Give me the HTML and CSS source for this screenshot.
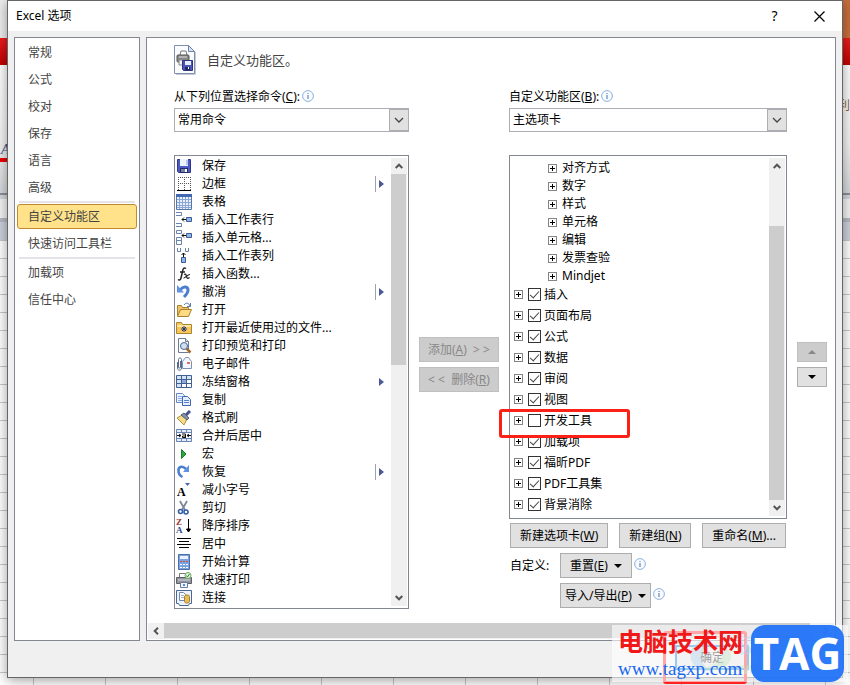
FILE: index.html
```
<!DOCTYPE html>
<html lang="zh-CN">
<head>
  <meta charset="UTF-8" />
  <meta name="viewport" content="width=device-width, initial-scale=1.0"/>
  <title>Excel 选项</title>
  <link rel="stylesheet" href="styles.css">
</head>
<body>

  <!-- Shared symbols -->
  <svg class="symbols" width="0" height="0">
    <symbol id="info" viewBox="0 0 12 12">
      <circle cx="6" cy="6" r="5.400" fill="#f7faff" stroke="#8fb0de"/>
      <path d="M5.500 3h1v1h-1zM5.500 5h1v4h-1z" fill="#4a6fa8"/>
    </symbol>
    <symbol id="chevron" viewBox="0 0 10 6">
      <path d="M1 1l4 4 4-4" fill="none" stroke="currentColor" stroke-width="1.3"/>
    </symbol>
    <symbol id="scroll-arrow" viewBox="0 0 8 6">
      <path d="M.7 5L4 1.700 7.300 5" fill="none" stroke="#555" stroke-width="2"/>
    </symbol>
    <symbol id="flyout" viewBox="0 0 5 8">
      <path d="M0 0l5 4-5 4z" fill="#4a5a98"/>
    </symbol>
    <symbol id="caret" viewBox="0 0 8 4">
      <path d="M0 0h8L4 4z" fill="currentColor"/>
    </symbol>
  </svg>

  <!-- Workbook behind the dialog -->
  <div class="workbook">
    <div class="wb-title"></div>
    <div class="wb-tabs"></div>
    <div class="wb-ribbon"><span class="wb-font">A</span><span class="wb-label">利</span></div>
    <div class="wb-formula"></div>
    <div class="wb-header"></div>
    <div class="wb-grid"></div>
  </div>

  <div class="dialog">
    <header class="titlebar">
      <h1>Excel 选项</h1>
      <button class="title-btn" aria-label="帮助">?</button>
      <button class="title-btn" aria-label="关闭">
        <svg width="11" height="11" viewBox="0 0 11 11"><path d="M.5.5l10 10M10.500.5l-10 10" stroke="#000" stroke-width="1.2"/></svg>
      </button>
    </header>

    <div class="client">
      <nav class="nav">
        <ul>
          <li><a href="#">常规</a></li>
          <li><a href="#">公式</a></li>
          <li><a href="#">校对</a></li>
          <li><a href="#">保存</a></li>
          <li><a href="#">语言</a></li>
          <li><a href="#">高级</a></li>
          <li class="sep"></li>
          <li><a href="#" class="active">自定义功能区</a></li>
          <li><a href="#">快速访问工具栏</a></li>
          <li class="sep"></li>
          <li><a href="#">加载项</a></li>
          <li><a href="#">信任中心</a></li>
        </ul>
      </nav>

      <main class="pane">
        <div class="heading">
          <svg width="24" height="30" viewBox="0 0 24 30">
            <path d="M1.500.5h14l6 6v22h-20z" fill="#fafcff" stroke="#7f90ab"/>
            <path d="M22.500 7v22.500H3" fill="none" stroke="#c6cbd3"/>
            <path d="M15.500.5v6h6z" fill="#d4e2f3" stroke="#6e83a8"/>
            <path d="M7 10l1-4h5l1 4" fill="#fff" stroke="#777"/>
            <rect x="4" y="10" width="12" height="7" rx="1" fill="#888" stroke="#555"/>
            <path d="M6 12h8" stroke="#ddd"/>
            <path d="M6 15h6v5H6z" fill="#f5f5f5" stroke="#888"/>
            <path d="M9.500 15.500h10v10h-9l-1-1z" fill="#4b55b5" stroke="#2f3480"/>
            <path d="M12 16h6v4h-6z" fill="#e8efff"/><path d="M12 22h5v3h-5z" fill="#252b60"/><path d="M15 22h1v2h-1z" fill="#fff"/>
          </svg>
          <h2>自定义功能区。</h2>
        </div>

        <div class="columns">
          <!-- Available commands -->
          <section class="commands">
            <div class="field-label">
              <label for="source">从下列位置选择命令(<u>C</u>):</label>
              <svg class="info"><use href="#info"/></svg>
            </div>
            <div class="select">
              <select id="source"><option>常用命令</option></select>
              <span class="drop"><svg width="10" height="6"><use href="#chevron"/></svg></span>
            </div>
            <div class="listbox">
              <ul class="command-list">
                <li>
                  <svg class="icon" viewBox="0 0 16 16"><path d="M1.500 1.500h13v13h-12l-1-1z" fill="#4d58c4" stroke="#30388c"/><path d="M4 1h8v7H4z" fill="#edf3ff"/><path d="M10 2h2v5h-2z" fill="#b5c7f0"/><path d="M4 10h8v5H4z" fill="#252b66"/><path d="M5 11h4v3H5z" fill="#747fa8"/><path d="M9 11h2v3H9z" fill="#fff"/></svg>
                  保存
                </li>
                <li>
                  <svg class="icon" viewBox="0 0 16 16"><path d="M2 1.500h13M2 7.500h13M2.500 1v13M8.500 1v13M14.500 1v13" fill="none" stroke="#555" stroke-dasharray="1 1"/><path d="M1 14.500h14" stroke="#000"/></svg>
                  边框
                  <span class="flyout split"><svg width="5" height="8"><use href="#flyout"/></svg></span>
                </li>
                <li>
                  <svg class="icon" viewBox="0 0 16 16"><path d="M.5.5h15v15H.5z" fill="#e9f1ff" stroke="#5876a7"/><path d="M3.500 3v12M6.500 3v12M9.500 3v12M12.500 3v12M1 5.500h14M1 8.500h14M1 11.500h14M1 13.500h14" stroke="#8aa7d5"/><path d="M0 0h16v3H0z" fill="#4169b0"/></svg>
                  表格
                </li>
                <li>
                  <svg class="icon" viewBox="0 0 16 16"><path d="M0 .5h5.500v3H0M0 11.500h5.500v3H0" fill="#fff" stroke="#6a83ad"/><path d="M6 7.500h4M8 5.500l-2 2 2 2" fill="none" stroke="#111"/><path d="M10.500 5.500h5v4h-5z" fill="#8db5ed" stroke="#3d5d91"/></svg>
                  插入工作表行
                </li>
                <li>
                  <svg class="icon" viewBox="0 0 16 16"><path d="M.5.500h5v3h-5zM.5 7.500h5v3h-5zM.5 10.500h5v4h-5z" fill="#fff" stroke="#6a83ad"/><path d="M6 5.500h4M8 3.500l-2 2 2 2" fill="none" stroke="#111"/><path d="M10.500 3.500h5v4h-5z" fill="#8db5ed" stroke="#3d5d91"/></svg>
                  插入单元格...
                </li>
                <li>
                  <svg class="icon" viewBox="0 0 16 16"><path d="M1.500 0v3.500h3V0M9.500 0v3.500h3V0" fill="#fff" stroke="#6a83ad"/><path d="M7.500 5v4M5.500 7l2-2 2 2" fill="none" stroke="#111"/><path d="M5.500 9.500h4v5h-4z" fill="#8db5ed" stroke="#3d5d91"/></svg>
                  插入工作表列
                </li>
                <li>
                  <svg class="icon" viewBox="0 0 16 16"><path d="M10 2.500c-2-1.500-3 0-3.500 3L5 12c-.5 2-1.500 2.500-3 1.500M4 6h5" fill="none" stroke="#222" stroke-width="1.500"/><path d="M8 8.500c2-1 2 0 2.500 2s1 2.500 3 1M14 8.500c-2-.5-5 4-6.500 3.500" fill="none" stroke="#222" stroke-width="1.200"/></svg>
                  插入函数...
                </li>
                <li>
                  <svg class="icon" viewBox="0 0 16 16"><path d="M4 6c4-5 8-3 8 0 0 3-2 5-4 7" fill="none" stroke="#4b7dd0" stroke-width="3"/><path d="M1 1v7.500h7z" fill="#5e91e3"/></svg>
                  撤消
                  <span class="flyout split"><svg width="5" height="8"><use href="#flyout"/></svg></span>
                </li>
                <li>
                  <svg class="icon" viewBox="0 0 16 16"><path d="M1.500 13.500v-10h4l1 2h6v3" fill="#eec46a" stroke="#a9812d"/><path d="M1.500 14.500l3-7h11l-3 7z" fill="#ffda80" stroke="#a9812d"/><path d="M8 3c2-3 5-2 6 1M14.500 1v3.500H11" fill="none" stroke="#5375a8"/></svg>
                  打开
                </li>
                <li>
                  <svg class="icon" viewBox="0 0 16 16"><path d="M.5 13.500v-11h5l1 2h9v9z" fill="#f5c75d" stroke="#ad842f"/><path d="M1 5h14v2H1z" fill="#ffe6a0"/><path d="M8 6v6M5 9h6M6 7l4 4M10 7l-4 4" stroke="#26387a"/></svg>
                  打开最近使用过的文件...
                </li>
                <li>
                  <svg class="icon" viewBox="0 0 16 16"><path d="M2.500.5h7l3 3v11h-10z" fill="#fff" stroke="#6c7c98"/><path d="M9.500.5v3h3" fill="#dbe5f4" stroke="#6c7c98"/><circle cx="8" cy="8" r="3.500" fill="#cfe2f5" stroke="#4d6687"/><path d="M10.500 10.500l4 4" stroke="#a86a32" stroke-width="2.500"/></svg>
                  打印预览和打印
                </li>
                <li>
                  <svg class="icon" viewBox="0 0 16 16"><path d="M6.500 5.500l3-4h3l3 4v7h-9z" fill="#f2f6ff" stroke="#7c90b5"/><path d="M11 6h3v2h-3z" fill="#e07050"/><path d="M1.500 6v6c0 3 4 3 4 0V3.500c0-2-3-2-3 0V11c0 1.500 2 1.500 2 0V5" fill="none" stroke="#596b89"/></svg>
                  电子邮件
                </li>
                <li>
                  <svg class="icon" viewBox="0 0 16 16"><path d="M.5 1.500h15v12H.5z" fill="#fff" stroke="#42618f"/><path d="M1 2h14v3H1zM1 2h4v11H1z" fill="#d5e2f5"/><path d="M5.500 2v12M10.500 2v12M1 5.500h14M1 9.500h14" stroke="#42618f"/><path d="M6 6h4v3H6z" fill="#8aabe0"/></svg>
                  冻结窗格
                  <span class="flyout"><svg width="5" height="8"><use href="#flyout"/></svg></span>
                </li>
                <li>
                  <svg class="icon" viewBox="0 0 16 16"><path d="M.5 1.500h6l2 2v7h-8z" fill="#edf4ff" stroke="#6586c0"/><path d="M2 4.500h4M2 6.500h4M2 8.500h4" stroke="#8dabe0"/><path d="M6.500 4.500h5l3 3v6h-8z" fill="#e4eeff" stroke="#3f65b0"/><path d="M8 8.500h5M8 10.500h5" stroke="#5c83c8"/></svg>
                  复制
                </li>
                <li>
                  <svg class="icon" viewBox="0 0 16 16"><path d="M1 8l5-3 5 4-3 6z" fill="#f5dc87" stroke="#ad9044"/><path d="M5 5l3-2 5 5-2 2z" fill="#888fa8" stroke="#555d77"/><path d="M10 5l4-4" stroke="#45508f" stroke-width="3"/></svg>
                  格式刷
                </li>
                <li>
                  <svg class="icon" viewBox="0 0 16 16"><path d="M.5 1.500h15v12H.5z" fill="#e5edfa" stroke="#6784b3"/><path d="M1 4.500h14M1 10.500h14M5.500 1v3M10.500 1v3M5.500 11v3M10.500 11v3" stroke="#6784b3"/><path d="M1 5h14v5H1z" fill="#fff"/><path d="M1 7.500h4M11 7.500h4M3 6l2 1.500L3 9M13 6l-2 1.500L13 9M6 6h3.500v4M9 8H6.500v1.500H9" fill="none" stroke="#111"/></svg>
                  合并后居中
                </li>
                <li>
                  <svg class="icon" viewBox="0 0 16 16"><path d="M5.500 3.500v9l4.500-4.500z" fill="#2aa83d" stroke="#168026"/></svg>
                  宏
                </li>
                <li>
                  <svg class="icon" viewBox="0 0 16 16"><path d="M10 5C6 1 2 3 2.500 7c0 3 2 5 4 6" fill="none" stroke="#4b7dd0" stroke-width="2.500"/><path d="M13 1v7H7z" fill="#5e91e3"/></svg>
                  恢复
                  <span class="flyout split"><svg width="5" height="8"><use href="#flyout"/></svg></span>
                </li>
                <li>
                  <svg class="icon" viewBox="0 0 16 16"><text x="1" y="14" class="glyph glyph-a">A</text><path d="M9 1h5l-2.500 3z" fill="#4967a8"/></svg>
                  减小字号
                </li>
                <li>
                  <svg class="icon" viewBox="0 0 16 16"><path d="M4 1l5 9M11 1L6 10" stroke="#7c8797" stroke-width="1.800"/><circle cx="4.500" cy="11.500" r="2" fill="none" stroke="#345da8" stroke-width="1.600"/><circle cx="10" cy="12" r="2" fill="none" stroke="#345da8" stroke-width="1.600"/></svg>
                  剪切
                </li>
                <li>
                  <svg class="icon" viewBox="0 0 16 16"><text x="0" y="7" class="glyph glyph-z">Z</text><text x="0" y="15" class="glyph glyph-sm">A</text><path d="M12.500 1v12M10.500 11l2 3 2-3z" fill="#000" stroke="#000"/></svg>
                  降序排序
                </li>
                <li>
                  <svg class="icon" viewBox="0 0 16 16"><path d="M1 2.500h14M3 5.500h10M1 8.500h14M3 11.500h10" stroke="#000"/></svg>
                  居中
                </li>
                <li>
                  <svg class="icon" viewBox="0 0 16 16"><path d="M2.500.500h11v15h-11z" fill="#7ba3df" stroke="#4b6ea8"/><path d="M4 2h8v3H4z" fill="#eaf2ff"/><path d="M4 7h2v1H4zM7 7h2v1H7zM10 7h2v1h-2z" fill="#d84f42"/><path d="M4 10h2v1H4zM7 10h2v1H7zM10 10h2v1h-2zM4 13h2v1H4zM7 13h2v1H7zM10 13h2v1h-2z" fill="#fff"/></svg>
                  开始计算
                </li>
                <li>
                  <svg class="icon" viewBox="0 0 16 16"><path d="M3.500 6V1.500h7V6" fill="#fff" stroke="#777"/><path d="M.5 5.500h15v6H.5z" fill="#92959c" stroke="#5c5f66"/><path d="M2 8h12" stroke="#d7d9dd"/><path d="M4.500 10.500h7v5h-7z" fill="#eff6ff" stroke="#6c7c98"/><path d="M7 12h2v2H7z" fill="#4a8fd8"/><circle cx="12" cy="3.500" r="3" fill="#e5f5df" stroke="#69a560"/><path d="M10.500 3.500l1 1.500 2-3" fill="none" stroke="#2c8a2c"/></svg>
                  快速打印
                </li>
                <li>
                  <svg class="icon" viewBox="0 0 16 16"><path d="M.5.500h15v13h-2l-1 2h-9l-1-2h-2z" fill="#edf3fc" stroke="#4e6791"/><path d="M3.500 2.500h4l2 2v6h-6z" fill="#fff" stroke="#7188b0"/><path d="M5 5.500h3M5 7.500h3" stroke="#9ab0d5"/><path d="M8.500 6.500c0-2 5-2 5 0v5c0 2-5 2-5 0z" fill="#e7bd5c" stroke="#a4802f"/></svg>
                  连接
                </li>
              </ul>
              <div class="scrollbar">
                <span class="arrow up"><svg width="8" height="6"><use href="#scroll-arrow"/></svg></span>
                <div class="track"><div class="thumb thumb-left"></div></div>
                <span class="arrow down"><svg width="8" height="6"><use href="#scroll-arrow"/></svg></span>
              </div>
            </div>
          </section>

          <div class="transfer">
            <button class="btn" disabled>添加(<u>A</u>)&nbsp; &gt; &gt;</button>
            <button class="btn" disabled>&lt; &lt;&nbsp; 删除(<u>R</u>)</button>
          </div>

          <!-- Ribbon tabs -->
          <section class="ribbon">
            <div class="field-label">
              <label for="target">自定义功能区(<u>B</u>):</label>
              <svg class="info"><use href="#info"/></svg>
            </div>
            <div class="select">
              <select id="target"><option>主选项卡</option></select>
              <span class="drop"><svg width="10" height="6"><use href="#chevron"/></svg></span>
            </div>
            <div class="listbox">
              <div class="tree">
                <ul class="groups">
                  <li><button class="expand" aria-label="展开"></button>对齐方式</li>
                  <li><button class="expand" aria-label="展开"></button>数字</li>
                  <li><button class="expand" aria-label="展开"></button>样式</li>
                  <li><button class="expand" aria-label="展开"></button>单元格</li>
                  <li><button class="expand" aria-label="展开"></button>编辑</li>
                  <li><button class="expand" aria-label="展开"></button>发票查验</li>
                  <li><button class="expand" aria-label="展开"></button>Mindjet</li>
                </ul>
                <ul class="tabs">
                  <li><button class="expand" aria-label="展开"></button><label><input type="checkbox" checked>插入</label></li>
                  <li><button class="expand" aria-label="展开"></button><label><input type="checkbox" checked>页面布局</label></li>
                  <li><button class="expand" aria-label="展开"></button><label><input type="checkbox" checked>公式</label></li>
                  <li><button class="expand" aria-label="展开"></button><label><input type="checkbox" checked>数据</label></li>
                  <li><button class="expand" aria-label="展开"></button><label><input type="checkbox" checked>审阅</label></li>
                  <li><button class="expand" aria-label="展开"></button><label><input type="checkbox" checked>视图</label></li>
                  <li class="marked"><button class="expand" aria-label="展开"></button><label><input type="checkbox">开发工具</label></li>
                  <li><button class="expand" aria-label="展开"></button><label><input type="checkbox" checked>加载项</label></li>
                  <li><button class="expand" aria-label="展开"></button><label><input type="checkbox" checked>福昕PDF</label></li>
                  <li><button class="expand" aria-label="展开"></button><label><input type="checkbox" checked>PDF工具集</label></li>
                  <li><button class="expand" aria-label="展开"></button><label><input type="checkbox" checked>背景消除</label></li>
                </ul>
              </div>
              <div class="scrollbar">
                <span class="arrow up"><svg width="8" height="6"><use href="#scroll-arrow"/></svg></span>
                <div class="track"><div class="thumb thumb-right"></div></div>
                <span class="arrow down"><svg width="8" height="6"><use href="#scroll-arrow"/></svg></span>
              </div>
            </div>

            <div class="tab-actions">
              <button class="btn">新建选项卡(<u>W</u>)</button>
              <button class="btn">新建组(<u>N</u>)</button>
              <button class="btn">重命名(<u>M</u>)...</button>
            </div>
            <div class="custom">
              <span class="custom-label">自定义:</span>
              <div class="custom-actions">
                <div class="action">
                  <button class="btn"><span>重置(<u>E</u>)</span><svg class="caret"><use href="#caret"/></svg></button>
                  <svg class="info"><use href="#info"/></svg>
                </div>
                <div class="action">
                  <button class="btn btn-tight"><span>导入/导出(<u>P</u>)</span><svg class="caret"><use href="#caret"/></svg></button>
                  <svg class="info"><use href="#info"/></svg>
                </div>
              </div>
            </div>
          </section>

          <div class="reorder">
            <button class="btn" aria-label="上移" disabled><svg class="caret flip"><use href="#caret"/></svg></button>
            <button class="btn" aria-label="下移"><svg class="caret"><use href="#caret"/></svg></button>
          </div>
        </div>

        <div class="hscroll">
          <span class="arrow left"><svg width="8" height="6"><use href="#scroll-arrow"/></svg></span>
          <div class="hthumb"></div>
          <span class="arrow right"><svg width="8" height="6"><use href="#scroll-arrow"/></svg></span>
        </div>
      </main>
    </div>

    <footer class="footer">
      <button class="btn btn-ok">确定</button>
      <button class="btn">取消</button>
    </footer>
  </div>

  <!-- Site badges over the corner -->
  <div class="ok-mark"></div>
  <div class="site">
    <svg width="44" height="36" viewBox="0 0 44 36">
      <path d="M16 1C2 4-3 19 6 28c4 5 12 6 17 4C10 29 8 11 24 2z" fill="#5a9bd8"/>
      <path d="M14 30c12 5 28 0 28-12 0-6-4-9-8-9 4 9-7 19-20 21z" fill="#7cc67c"/>
    </svg>
    <div class="site-text">
      <strong>极光下载站</strong>
      <span>www.xz7.com</span>
    </div>
  </div>
  <div class="badge">
    <div class="badge-text">
      <strong>电脑技术网</strong>
      <span>www.tagxp.com</span>
    </div>
    <div class="badge-logo">TAG</div>
  </div>

</body>
</html>
```
FILE: styles.css
```
*, *::after {
  box-sizing: border-box;
}
body {
  position: relative;
  margin: 0;
  min-height: 100vh;
  padding: 0 7px 7px;
  font-family: "Noto Sans", "Noto Sans CJK SC", sans-serif;
  font-size: 12px;
  line-height: 18px;
  color: #000;
  overflow-x: hidden;
}
ul {
  list-style: none;
  margin: 0;
  padding: 0;
}
h1, h2 {
  margin: 0;
  font-weight: normal;
}
button, select {
  font: inherit;
  color: inherit;
}
svg {
  display: block;
  flex: none;
}
.symbols {
  position: absolute;
}

/* Workbook */
.workbook {
  position: absolute;
  inset: 0;
  display: flex;
  flex-direction: column;
  overflow: hidden;
}
.wb-title {
  height: 38px;
  background: linear-gradient(90deg, #eee 60%, #c96f3c 90%);
}
.wb-tabs {
  height: 27px;
  background: linear-gradient(#ee1c1c, #c00000);
}
.wb-ribbon {
  height: 130px;
  display: flex;
  justify-content: space-between;
  background: linear-gradient(#fff, #f4f4f4 60%, #d5d8dc);
  border-bottom: 2px solid #8b909a;
}
.wb-font {
  align-self: center;
  margin-top: 45px;
  padding-left: 1px;
  font: italic 14px/16px "Liberation Serif", serif;
  color: #2f4f8f;
  border-bottom: 4px solid #e00;
}
.wb-label {
  width: 12px;
  padding-top: 32px;
  color: #875a40;
}
.wb-formula {
  height: 27px;
  background: #f4f4f4;
  border-top: 4px solid #d5d8dc;
  border-bottom: 4px solid #b5bac4;
}
.wb-header {
  height: 18px;
  background: #cdd1da;
}
.wb-grid {
  flex: 1;
  background:
    repeating-linear-gradient(#c8c8c8 0 1px, transparent 1px 18px),
    repeating-linear-gradient(90deg, transparent 0 33px, #c8c8c8 33px 34px, transparent 34px 72px),
    #fff;
}

/* Dialog */
.dialog {
  position: relative;
  background: #f0f0f0;
  border: 1px solid #666;
  box-shadow: 0 2px 12px rgba(0,0,0,0.4);
}
.titlebar {
  display: flex;
  align-items: center;
  height: 30px;
  padding-left: 8px;
  background: #fff;
}
.titlebar h1 {
  flex: 1;
  font-size: 12px;
}
.title-btn {
  display: flex;
  align-items: center;
  justify-content: center;
  width: 45px;
  height: 30px;
  padding: 0;
  border: none;
  background: none;
  font-size: 14px;
}
.client {
  display: flex;
  gap: 6px;
  padding: 6px 6px 0;
}
.nav, .pane {
  background: #fff;
  border: 1px solid #828790;
}
.nav {
  width: 126px;
  padding: 1px 2px;
  color: #444;
}
.nav a {
  display: block;
  height: 27px;
  padding-left: 11px;
  line-height: 27px;
  color: inherit;
  text-decoration: none;
}
.nav .active {
  height: 25px;
  margin: 1px 0;
  padding-left: 10px;
  line-height: 23px;
  background: #ffe28a;
  border: 1px solid #c28a30;
  border-radius: 3px;
}
.nav .sep {
  height: 2px;
  margin: 0 2px;
  background: #e2e4e9;
}
.pane {
  flex: 1;
  padding: 7px 1px 1px;
}
.heading {
  display: flex;
  align-items: center;
  gap: 10px;
  padding-left: 25px;
  margin-bottom: 13px;
}
.heading h2 {
  font-size: 13px;
  color: #444;
}
.columns {
  display: grid;
  grid-template-columns: 235fr 80px 278fr 30px;
  gap: 10px;
  padding: 0 7px 0 26px;
}
.field-label {
  display: flex;
  height: 20px;
  gap: 2px;
}
.info {
  width: 12px;
  height: 12px;
}
.field-label .info {
  margin-top: 2px;
}
.select {
  position: relative;
  height: 24px;
  margin-bottom: 23px;
}
.select select {
  width: 100%;
  height: 24px;
  padding: 0 3px;
  appearance: none;
  background: #fff;
  border: 1px solid #abadb3;
  border-radius: 0;
}
.drop {
  position: absolute;
  top: 1px;
  right: 0;
  bottom: 1px;
  width: 20px;
  display: flex;
  align-items: center;
  justify-content: center;
  color: #444;
  background: #e1e1e1;
  border: 1px solid #abadb3;
  pointer-events: none;
}
.listbox {
  display: flex;
  border: 1px solid #828790;
  background: #fff;
}
.command-list, .tree {
  flex: 1;
}
.command-list {
  padding: 1px 0;
}
.command-list li {
  display: flex;
  align-items: center;
  height: 18px;
  gap: 10px;
  padding: 0 6px 0 1px;
}
.icon {
  width: 16px;
  height: 16px;
}
.glyph {
  font-family: "Liberation Serif", serif;
  font-weight: bold;
}
.glyph-a {
  font-size: 12px;
}
.glyph-z, .glyph-sm {
  font-size: 9px;
}
.glyph-z {
  fill: #a03030;
}
.glyph-sm {
  fill: #304a90;
}
.flyout {
  display: flex;
  align-items: center;
  height: 16px;
  margin-left: auto;
  padding-left: 3px;
}
.flyout.split {
  border-left: 1px solid #a0a0a8;
}

/* Scrollbars */
.scrollbar {
  display: flex;
  flex-direction: column;
  width: 16px;
  margin: 2px 1px;
  background: #f0f0f0;
}
.arrow {
  display: flex;
  align-items: center;
  justify-content: center;
  width: 16px;
  height: 16px;
}
.down svg, .flip {
  transform: rotate(180deg);
}
.left svg {
  transform: rotate(-90deg);
}
.right svg {
  transform: rotate(90deg);
}
.track {
  flex: 1;
  display: flex;
  flex-direction: column;
}
.thumb {
  width: 15px;
  background: #cdcdcd;
}
.thumb-left {
  height: 46%;
}
.thumb-right {
  height: 84%;
  margin-top: auto;
}
.hscroll {
  display: flex;
  height: 16px;
  margin-top: 14px;
  background: #f0f0f0;
}
.hthumb {
  flex: 1;
  height: 15px;
  margin-right: 8px;
  background: #cdcdcd;
}

/* Buttons */
.btn {
  display: flex;
  align-items: center;
  justify-content: center;
  height: 25px;
  padding: 0 9px;
  background: #e1e1e1;
  border: 1px solid #adadad;
  white-space: nowrap;
}
.btn:disabled {
  color: #888;
  background: #ccc;
  border-color: #bfbfbf;
}
.caret {
  width: 8px;
  height: 4px;
}
.transfer, .reorder {
  display: flex;
  flex-direction: column;
  gap: 5px;
}
.transfer {
  padding-top: 249px;
}
.reorder {
  padding-top: 254px;
}
.transfer .btn, .reorder .btn {
  padding: 0;
}
.reorder .btn {
  height: 20px;
}

/* Tree */
.tree {
  padding: 3px 0;
}
.tree li {
  position: relative;
  display: flex;
  align-items: center;
}
.groups li {
  height: 18px;
  gap: 5px;
  padding-left: 38px;
}
.tabs {
  margin-top: -1px;
}
.tabs li {
  height: 21px;
  gap: 5px;
  padding-left: 4px;
}
.tabs label {
  display: flex;
  align-items: center;
  gap: 3px;
}
.expand {
  width: 9px;
  height: 9px;
  padding: 0;
  border: 1px solid #848484;
  background:
    linear-gradient(#000, #000) center / 5px 1px no-repeat,
    linear-gradient(#000, #000) center / 1px 5px no-repeat,
    #fff;
}
.tabs input {
  display: grid;
  justify-content: center;
  width: 13px;
  height: 13px;
  margin: 0;
  appearance: none;
  border: 1px solid #333;
  background: #fff;
}
.tabs input:checked::after {
  content: "";
  width: 5px;
  height: 9px;
  border: solid #444;
  border-width: 0 1px 1px 0;
  transform: rotate(42deg);
}
.marked::after {
  content: "";
  position: absolute;
  z-index: 1;
  top: -1px;
  left: -11px;
  width: 131px;
  height: 29px;
  border: 3px solid #fb2116;
  border-radius: 3px;
}
.tab-actions {
  display: flex;
  justify-content: space-between;
  margin: 4px 1px 5px;
}
.custom {
  display: flex;
  padding-left: 1px;
}
.custom-label {
  width: 50px;
  line-height: 25px;
}
.custom-actions {
  display: flex;
  flex-direction: column;
  gap: 5px;
}
.action {
  display: flex;
  gap: 2px;
}
.action .btn {
  gap: 6px;
}
.action .btn-tight {
  padding: 0 4px;
}
.action .info {
  margin-top: 5px;
}
.footer {
  display: flex;
  justify-content: flex-end;
  gap: 10px;
  padding: 4px 9px 7px;
}
.footer .btn {
  width: 74px;
}
.footer .btn-ok {
  border: 2px solid #0078d7;
}

/* Badges */
.ok-mark {
  position: absolute;
  right: 103px;
  bottom: 1px;
  width: 84px;
  height: 53px;
  border: 3px solid #f22;
  border-radius: 3px;
}
.site {
  position: absolute;
  right: 9px;
  bottom: 6px;
  display: flex;
  align-items: center;
  gap: 4px;
  opacity: 0.5;
}
.site-text {
  display: flex;
  flex-direction: column;
}
.site-text strong {
  font-size: 20px;
  line-height: 26px;
  color: #5a9bd8;
}
.site-text span {
  font: bold 16px/20px "Liberation Sans", sans-serif;
  color: #7cc67c;
}
.badge {
  position: absolute;
  right: 2px;
  bottom: 3px;
  display: flex;
  justify-content: space-between;
  width: 236px;
  height: 57px;
  padding: 0 4px 0 6px;
  background: rgba(255,255,255,0.6);
}
.badge-text {
  display: flex;
  flex-direction: column;
}
.badge-text strong {
  font-size: 25px;
  line-height: 32px;
  color: #f01818;
}
.badge-text span {
  font: 19px/24px "Liberation Serif", serif;
  color: #1868f0;
}
.badge-logo {
  flex: none;
  width: 93px;
  border-radius: 14px;
  background: rgba(28,112,248,0.93);
  color: #fff;
  font: bold 44px/57px "Open Sans", sans-serif;
  text-align: center;
}
```
